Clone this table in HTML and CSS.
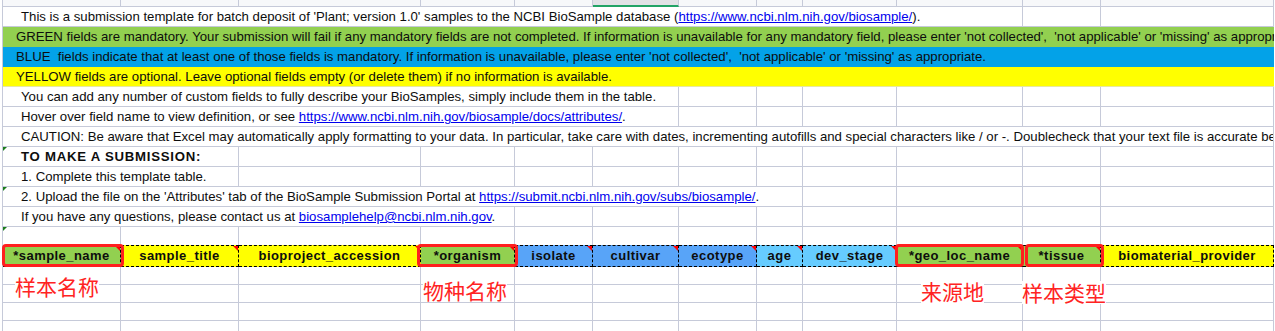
FILE: index.html
```html
<!DOCTYPE html>
<html lang="en">
<head>
<meta charset="utf-8">
<title>BioSample Plant template</title>
<link rel="stylesheet" href="styles.css">
</head>
<body>
<div class="canvas">
  <div class="sheet">
    <div class="row strip">
      <div class="cell"></div><div class="cell"></div><div class="cell"></div><div class="cell"></div><div class="cell"></div>
      <div class="cell selected"></div>
      <div class="cell"></div><div class="cell"></div><div class="cell"></div><div class="cell"></div><div class="cell"></div><div class="cell"></div>
    </div>

    <div class="row">
      <div class="cell text indent span-10">This is a submission template for batch deposit of 'Plant; version 1.0' samples to the NCBI BioSample database (<span class="link">https://www.ncbi.nlm.nih.gov/biosample/</span>).</div>
      <div class="cell"></div><div class="cell"></div>
    </div>

    <div class="row band green">
      <div class="cell text span-all">GREEN fields are mandatory. Your submission will fail if any mandatory fields are not completed. If information is unavailable for any mandatory field, please enter 'not collected',  'not applicable' or 'missing' as appropriate.</div>
    </div>
    <div class="row band blue">
      <div class="cell text span-all">BLUE  fields indicate that at least one of those fields is mandatory. If information is unavailable, please enter 'not collected',  'not applicable' or 'missing' as appropriate.</div>
    </div>
    <div class="row band yellow">
      <div class="cell text span-all">YELLOW fields are optional. Leave optional fields empty (or delete them) if no information is available.</div>
    </div>

    <div class="row">
      <div class="cell text indent span-6">You can add any number of custom fields to fully describe your BioSamples, simply include them in the table.</div>
      <div class="cell"></div><div class="cell"></div><div class="cell"></div><div class="cell"></div><div class="cell"></div><div class="cell"></div>
    </div>
    <div class="row">
      <div class="cell text indent span-6">Hover over field name to view definition, or see <span class="link">https://www.ncbi.nlm.nih.gov/biosample/docs/attributes/</span>.</div>
      <div class="cell"></div><div class="cell"></div><div class="cell"></div><div class="cell"></div><div class="cell"></div><div class="cell"></div>
    </div>
    <div class="row">
      <div class="cell text indent span-all">CAUTION: Be aware that Excel may automatically apply formatting to your data. In particular, take care with dates, incrementing autofills and special characters like / or -. Doublecheck that your text file is accurate before uploading.</div>
    </div>
    <div class="row">
      <div class="cell text indent span-2 bold flag">TO MAKE A SUBMISSION:</div>
      <div class="cell"></div><div class="cell"></div><div class="cell"></div><div class="cell"></div><div class="cell"></div><div class="cell"></div><div class="cell"></div><div class="cell"></div><div class="cell"></div><div class="cell"></div>
    </div>
    <div class="row">
      <div class="cell text indent span-2">1. Complete this template table.</div>
      <div class="cell"></div><div class="cell"></div><div class="cell"></div><div class="cell"></div><div class="cell"></div><div class="cell"></div><div class="cell"></div><div class="cell"></div><div class="cell"></div><div class="cell"></div>
    </div>
    <div class="row">
      <div class="cell text indent span-8 flag">2. Upload the file on the 'Attributes' tab of the BioSample Submission Portal at <span class="link">https://submit.ncbi.nlm.nih.gov/subs/biosample/</span>.</div>
      <div class="cell"></div><div class="cell"></div><div class="cell"></div><div class="cell"></div>
    </div>
    <div class="row">
      <div class="cell text indent span-4">If you have any questions, please contact us at <span class="link">biosamplehelp@ncbi.nlm.nih.gov</span>.</div>
      <div class="cell"></div><div class="cell"></div><div class="cell"></div><div class="cell"></div><div class="cell"></div><div class="cell"></div><div class="cell"></div><div class="cell"></div>
    </div>

    <div class="row spacer">
      <div class="cell flag"></div><div class="cell"></div><div class="cell"></div><div class="cell"></div><div class="cell"></div><div class="cell"></div><div class="cell"></div><div class="cell"></div><div class="cell"></div><div class="cell"></div><div class="cell"></div><div class="cell"></div>
    </div>

    <div class="row header">
      <div class="cell head h-green note">*sample_name</div>
      <div class="cell head h-yellow note">sample_title</div>
      <div class="cell head h-yellow note">bioproject_accession</div>
      <div class="cell head h-green note">*organism</div>
      <div class="cell head h-blue note">isolate</div>
      <div class="cell head h-blue note">cultivar</div>
      <div class="cell head h-blue note">ecotype</div>
      <div class="cell head h-sky note">age</div>
      <div class="cell head h-sky note">dev_stage</div>
      <div class="cell head h-green note">*geo_loc_name</div>
      <div class="cell head h-green note">*tissue</div>
      <div class="cell head h-yellow">biomaterial_provider</div>
    </div>

    <div class="row short">
      <div class="cell"></div><div class="cell"></div><div class="cell"></div><div class="cell"></div><div class="cell"></div><div class="cell"></div><div class="cell"></div><div class="cell"></div><div class="cell"></div><div class="cell"></div><div class="cell"></div><div class="cell"></div>
    </div>
    <div class="row short">
      <div class="cell"></div><div class="cell"></div><div class="cell"></div><div class="cell"></div><div class="cell"></div><div class="cell"></div><div class="cell"></div><div class="cell"></div><div class="cell"></div><div class="cell"></div><div class="cell"></div><div class="cell"></div>
    </div>
    <div class="row short">
      <div class="cell"></div><div class="cell"></div><div class="cell"></div><div class="cell"></div><div class="cell"></div><div class="cell"></div><div class="cell"></div><div class="cell"></div><div class="cell"></div><div class="cell"></div><div class="cell"></div><div class="cell"></div>
    </div>
    <div class="row short">
      <div class="cell"></div><div class="cell"></div><div class="cell"></div><div class="cell"></div><div class="cell"></div><div class="cell"></div><div class="cell"></div><div class="cell"></div><div class="cell"></div><div class="cell"></div><div class="cell"></div><div class="cell"></div>
    </div>
  </div>

  <div class="mark mark-sample"></div>
  <div class="mark mark-organism"></div>
  <div class="mark mark-geo"></div>
  <div class="mark mark-tissue"></div>

  <div class="label label-sample">样本名称</div>
  <div class="label label-organism">物种名称</div>
  <div class="label label-geo">来源地</div>
  <div class="label label-tissue">样本类型</div>
</div>
</body>
</html>
```

FILE: styles.css
```css
html, body {
  margin: 0;
  padding: 0;
  background: #ffffff;
}

body {
  width: 1275px;
  height: 331px;
  overflow: hidden;
  font-family: "Liberation Sans", Arial, sans-serif;
  font-size: 13.2px;
  color: #0d0d0d;
}

.canvas {
  position: relative;
  width: 1275px;
  height: 331px;
}

.sheet {
  margin-left: 2px;
  border-left: 1px solid #c6cad9;
  width: 1272px;
}

.row {
  display: grid;
  grid-template-columns: 118px 118px 182px 94px 78px 86px 78px 46px 94px 126px 78px 173px;
  height: 20px;
}

.cell {
  position: relative;
  box-sizing: border-box;
  border-right: 1px solid #c6cad9;
  border-bottom: 1px solid #c6cad9;
  min-width: 0;
}

.text {
  white-space: pre;
  overflow: hidden;
  line-height: 19px;
  padding-left: 13px;
}

.text.indent {
  padding-left: 18px;
}

.bold {
  font-weight: bold;
  letter-spacing: 0.75px;
}

.link {
  color: #0000ee;
  text-decoration: underline;
}

.span-2 { grid-column: span 2; }
.span-4 { grid-column: span 4; }
.span-6 { grid-column: span 6; }
.span-8 { grid-column: span 8; }
.span-10 { grid-column: span 10; }
.span-all { grid-column: 1 / -1; }

/* bottom sliver of the sheet's column headers */
.strip {
  height: 7px;
}

.strip .cell {
  background: #f7f8fa;
}

.strip .cell.selected {
  background: #e1e2e6;
  border-bottom: 2px solid #21a366;
}

/* coloured instruction bands */
.band .cell {
  border-right: 0;
}

.green .cell {
  background: #92d050;
  border-bottom-color: #92d050;
}

.blue .cell {
  background: #03a2e8;
  border-bottom-color: #03a2e8;
}

.yellow .cell {
  background: #ffff00;
  border-bottom-color: #e8e8a0;
}

/* small green error flags in the top-left corner */
.flag::before {
  content: "";
  position: absolute;
  top: 0;
  left: 0;
  width: 0;
  height: 0;
  border-top: 4px solid #1c7c1c;
  border-right: 4px solid transparent;
}

.spacer {
  height: 18px;
}

.spacer .cell {
  border-bottom: 0;
}

/* field header row */
.header {
  height: 22px;
}

.head {
  border-top: 1px dashed #000000;
  border-bottom: 1px dashed #000000;
  border-right: 1px dashed #000000;
  font-size: 13px;
  font-weight: bold;
  letter-spacing: 0.45px;
  text-align: center;
  line-height: 20px;
  white-space: nowrap;
  overflow: hidden;
}

.h-green { background: #92d050; }
.h-yellow { background: #ffff00; }
.h-blue { background: #58a4f8; }
.h-sky { background: #66ccff; }

.note::after {
  content: "";
  position: absolute;
  top: 0;
  right: 0;
  width: 0;
  height: 0;
  border-top: 5px solid #ff0000;
  border-left: 5px solid transparent;
}

.short {
  height: 18px;
}

/* red highlight boxes drawn over the header row */
.mark {
  position: absolute;
  top: 244px;
  height: 23px;
  box-sizing: border-box;
  border: 3px solid #ff1f1f;
  border-radius: 4px;
}

.mark-sample { left: 2px; width: 122px; }
.mark-organism { left: 417px; width: 101px; }
.mark-geo { left: 895px; width: 129px; }
.mark-tissue { left: 1025px; width: 79px; }

/* red Chinese annotations */
.label {
  position: absolute;
  font-family: "Noto Sans CJK SC", "Noto Sans CJK JP", sans-serif;
  font-size: 21px;
  line-height: 23px;
  color: #ff2323;
  background: #ffffff;
  white-space: nowrap;
}

.label-sample { left: 15px; top: 275px; }
.label-organism { left: 423px; top: 279px; }
.label-geo { left: 921px; top: 280px; }
.label-tissue { left: 1022px; top: 281px; }
```
